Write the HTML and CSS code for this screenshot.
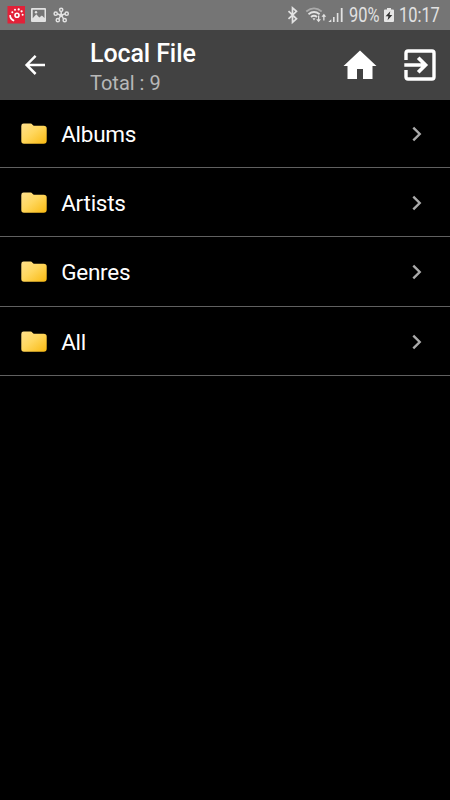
FILE: index.html
```
<!DOCTYPE html>
<html lang="en">
<head>
<meta charset="utf-8">
<title>Local File</title>
<link rel="stylesheet" href="styles.css">
</head>
<body>
<svg class="defs" width="0" height="0" aria-hidden="true">
  <defs>
    <linearGradient id="gold" x1="0" y1="0" x2="1" y2="1">
      <stop offset="0" stop-color="#ffe08c"/>
      <stop offset=".45" stop-color="#ffd75e"/>
      <stop offset="1" stop-color="#f9b910"/>
    </linearGradient>
    <symbol id="folder" viewBox="0 0 26 22">
      <path d="M.3 3Q.3.6 2.6.6H9.5Q10.7.6 11.5 1.7L12.7 2.8H22.7Q25.7 2.8 25.7 5.4V17.7Q25.7 20.7 22.7 20.7H3Q.3 20.7.3 18Z" fill="url(#gold)"/>
    </symbol>
    <symbol id="chevron" viewBox="0 0 10 16">
      <path d="M1.3 1.7 7.7 8 1.3 14.3" fill="none" stroke="#aaa" stroke-width="2.4"/>
    </symbol>
  </defs>
</svg>
<div class="statusbar">
  <svg class="notifications" width="64" height="20" viewBox="7 5 64 20">
    <path fill="#e22138" d="M7.5 6h17.5v17.5h-17.5z"/>
    <circle cx="17" cy="15.2" r="2" fill="none" stroke="#fff" stroke-width="1.6"/>
    <path d="M10 15.2Q10.4 19.6 14.2 20.7" fill="none" stroke="#fff" stroke-width="1.7"/>
    <g fill="#fff"><circle cx="12.3" cy="12.2" r="1"/><circle cx="15" cy="9.8" r="1"/><circle cx="18.7" cy="9.4" r="1.1"/><circle cx="21.6" cy="11.3" r="1.1"/><circle cx="22.6" cy="14.7" r="1"/></g>
    <path fill="#e2e2e2" fill-rule="evenodd" d="M32 8h13q1 0 1 1v12q0 1-1 1H32q-1 0-1-1V9q0-1 1-1zm.7 1.7v8.6l3.6-4 3 3.2 2.6-2 2.6 2.6V9.7z"/><circle cx="36" cy="12.3" r="1.2" fill="#e2e2e2"/>
    <g stroke="#e2e2e2" stroke-width="1.5" fill="none"><path d="M61.2 15V11M61.2 15.2l-4.2-1.5M61.2 15.2l4.2-1.5M61.2 15.2l-2.6 4M61.2 15.2l2.6 4"/><circle cx="61.2" cy="9.8" r="1.6"/><circle cx="55.7" cy="13.7" r="1.6"/><circle cx="66.7" cy="13.7" r="1.6"/><circle cx="57.8" cy="20.2" r="1.6"/><circle cx="64.7" cy="20.2" r="1.6"/></g>
    <circle cx="61.2" cy="15.2" r="1.8" fill="#e2e2e2"/>
  </svg>
  <svg class="radios" width="60" height="20" viewBox="286 5 60 20">
    <path d="M288.5 11.2l8 7.6-4 3.5V7.8l4 3.5-8 7.5" fill="none" stroke="#e2e2e2" stroke-width="1.7"/>
    <g fill="none" stroke-width="1.8"><path stroke="#aaa" d="M306.3 11.5Q314 5.3 321.7 11.5"/><path stroke="#e2e2e2" d="M308.5 14.2Q314 9.7 319.6 14.2M311 17Q314 14.5 317 17"/></g>
    <path fill="#e2e2e2" d="M312.5 18.2h3l-1.5 2.3zM318 15.5v3.7h-1.8l2.4 3 2.4-3h-1.7v-3.7zM323.2 20.5v-3.7h-1.7l2.4-3 2.3 3h-1.7v3.7z"/>
    <path fill="#e2e2e2" d="M328.3 22l3-2.8V22zM333 17h1.6v5H333zM336.8 13h1.6v9h-1.6zM340.8 8h1.8v14h-1.8z"/>
  </svg>
  <span class="percent"><span class="narrow">90%</span></span>
  <svg class="battery" width="12" height="16" viewBox="0 0 12 16">
    <path fill="#e6e6e6" d="M4 1h4v1.5h2Q11 2.5 11 3.5V14Q11 15 10 15H2Q1 15 1 14V3.5Q1 2.5 2 2.5h2z"/>
    <path fill="#333" d="M7.3 4.3 2.6 9.2h2.8l-.8 4L9.3 8H6.5z"/>
  </svg>
  <span class="clock"><span class="narrow">10:17</span></span>
</div>
<header class="header">
  <svg class="back" width="24" height="24" viewBox="0 0 24 24"><path d="M12.6 2.8 3.6 11.9l9 9.1M3.8 11.9H22" fill="none" stroke="#fff" stroke-width="2.5"/></svg>
  <div class="titles">
    <h1>Local File</h1>
    <p>Total : 9</p>
  </div>
  <svg class="home" width="34" height="30" viewBox="0 0 34 30"><path fill="#fff" d="M17 .5 33.5 16H29.5v13H20V19H14v10H4.5V16H.5z"/></svg>
  <svg class="exit" width="32" height="32" viewBox="0 0 32 32"><path d="M2 11V4Q2 2 4 2H28Q30 2 30 4V28Q30 30 28 30H4Q2 30 2 28V21" fill="none" stroke="#fff" stroke-width="3.4"/><path d="M.3 16H21M14.2 8.7 21.5 16l-7.3 7.3" fill="none" stroke="#fff" stroke-width="3.7"/></svg>
</header>
<main class="list">
  <div class="row"><svg class="folder"><use href="#folder"/></svg><span class="label">Albums</span><svg class="chevron"><use href="#chevron"/></svg></div>
  <div class="row"><svg class="folder"><use href="#folder"/></svg><span class="label">Artists</span><svg class="chevron"><use href="#chevron"/></svg></div>
  <div class="row"><svg class="folder"><use href="#folder"/></svg><span class="label">Genres</span><svg class="chevron"><use href="#chevron"/></svg></div>
  <div class="row"><svg class="folder"><use href="#folder"/></svg><span class="label">All</span><svg class="chevron"><use href="#chevron"/></svg></div>
</main>
</body>
</html>
```

FILE: styles.css
```
* { box-sizing: border-box; }
body {
  margin: 0;
  height: 800px;
  overflow: hidden;
  background: #000;
  color: #fff;
  font-family: Roboto, "Liberation Sans", sans-serif;
}
.defs { position: absolute; }
svg { display: block; flex: none; }
.statusbar {
  display: flex;
  align-items: center;
  height: 30px;
  padding-left: 7px;
  background: #757575;
  color: #e2e2e2;
  font-size: 19.5px;
  line-height: 30px;
}
.radios { margin-left: 215px; }
.percent { width: 34px; margin-left: 3px; padding-top: 2px; }
.clock { margin-left: 4px; padding-top: 2px; }
.narrow { display: block; white-space: nowrap; transform: scaleX(.84); transform-origin: left; }
.header {
  display: flex;
  align-items: center;
  height: 70px;
  padding-left: 23px;
  background: #424242;
}
.titles { width: 253px; margin-left: 43px; padding: 6px 0 1px; }
.titles h1 {
  margin: 0;
  font-size: 25px;
  font-weight: 500;
  line-height: 31px;
  letter-spacing: -.1px;
}
.titles p {
  margin: 0;
  color: #b8b8b8;
  font-size: 20px;
  line-height: 28px;
}
.exit { margin-left: 27px; }
.list { margin-top: -1.5px; }
.row {
  display: flex;
  align-items: center;
  height: 69.35px;
  padding: 2px 28px 0 21px;
  border-bottom: 1px solid #606060;
}
.folder { width: 26px; height: 22px; }
.label { flex: 1; margin-left: 14.2px; font-size: 22.5px; letter-spacing: -.25px; }
.chevron { width: 10px; height: 16px; }
```
